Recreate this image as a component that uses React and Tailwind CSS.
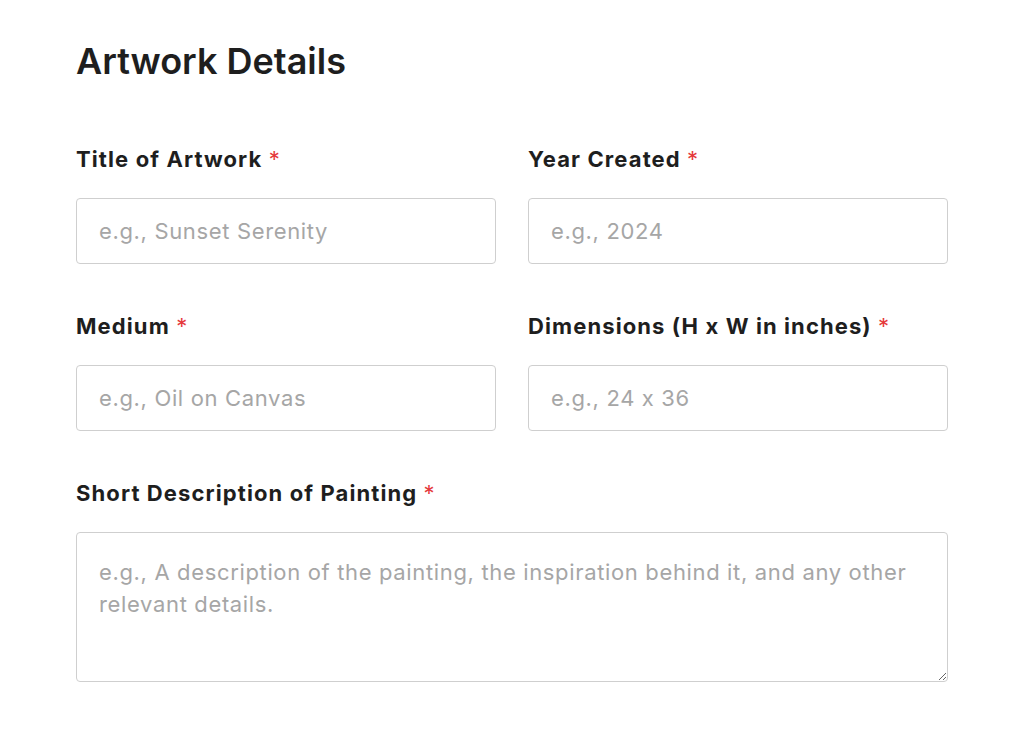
import React from 'react';

const inputClass =
  'w-full h-[66px] px-[22px] rounded-[4px] border border-[#cfcfcf] bg-white text-[22px] tracking-[0.65px] text-[#333] placeholder-[#a6a6a6] focus:outline-none';

function Label({ children }) {
  return (
    <label className="block text-[22px] leading-[28px] tracking-[1.1px] font-bold text-[#1e1e1e] mb-[25px]">
      {children} <span className="text-[#e5393b] font-normal">*</span>
    </label>
  );
}

export default function App() {
  return (
    <div className="min-h-screen bg-white font-['Inter',sans-serif] [font-feature-settings:'calt'_0] pl-[76px] pt-[41px]">
      <div className="w-[872px]">
        <h2 className="text-[36px] leading-[40px] font-semibold text-[#1e1e1e] mb-[64px]">
          Artwork Details
        </h2>

        {/* First two rows */}
        <div className="grid grid-cols-2 gap-x-[32px] gap-y-[48px]">
          <div>
            <Label>Title of Artwork</Label>
            <input type="text" placeholder="e.g., Sunset Serenity" className={inputClass} />
          </div>
          <div>
            <Label>Year Created</Label>
            <input type="text" placeholder="e.g., 2024" className={inputClass} />
          </div>
          <div>
            <Label>Medium</Label>
            <input type="text" placeholder="e.g., Oil on Canvas" className={inputClass} />
          </div>
          <div>
            <Label>Dimensions (H x W in inches)</Label>
            <input type="text" placeholder="e.g., 24 x 36" className={inputClass} />
          </div>
        </div>

        {/* Description */}
        <div className="mt-[48px]">
          <Label>Short Description of Painting</Label>
          <textarea
            placeholder="e.g., A description of the painting, the inspiration behind it, and any other relevant details."
            className="block w-full h-[150px] px-[22px] py-[23px] rounded-[4px] border border-[#cfcfcf] bg-white text-[22px] leading-[32px] tracking-[0.65px] text-[#333] placeholder-[#a6a6a6] focus:outline-none"
          />
        </div>
      </div>
    </div>
  );
}
